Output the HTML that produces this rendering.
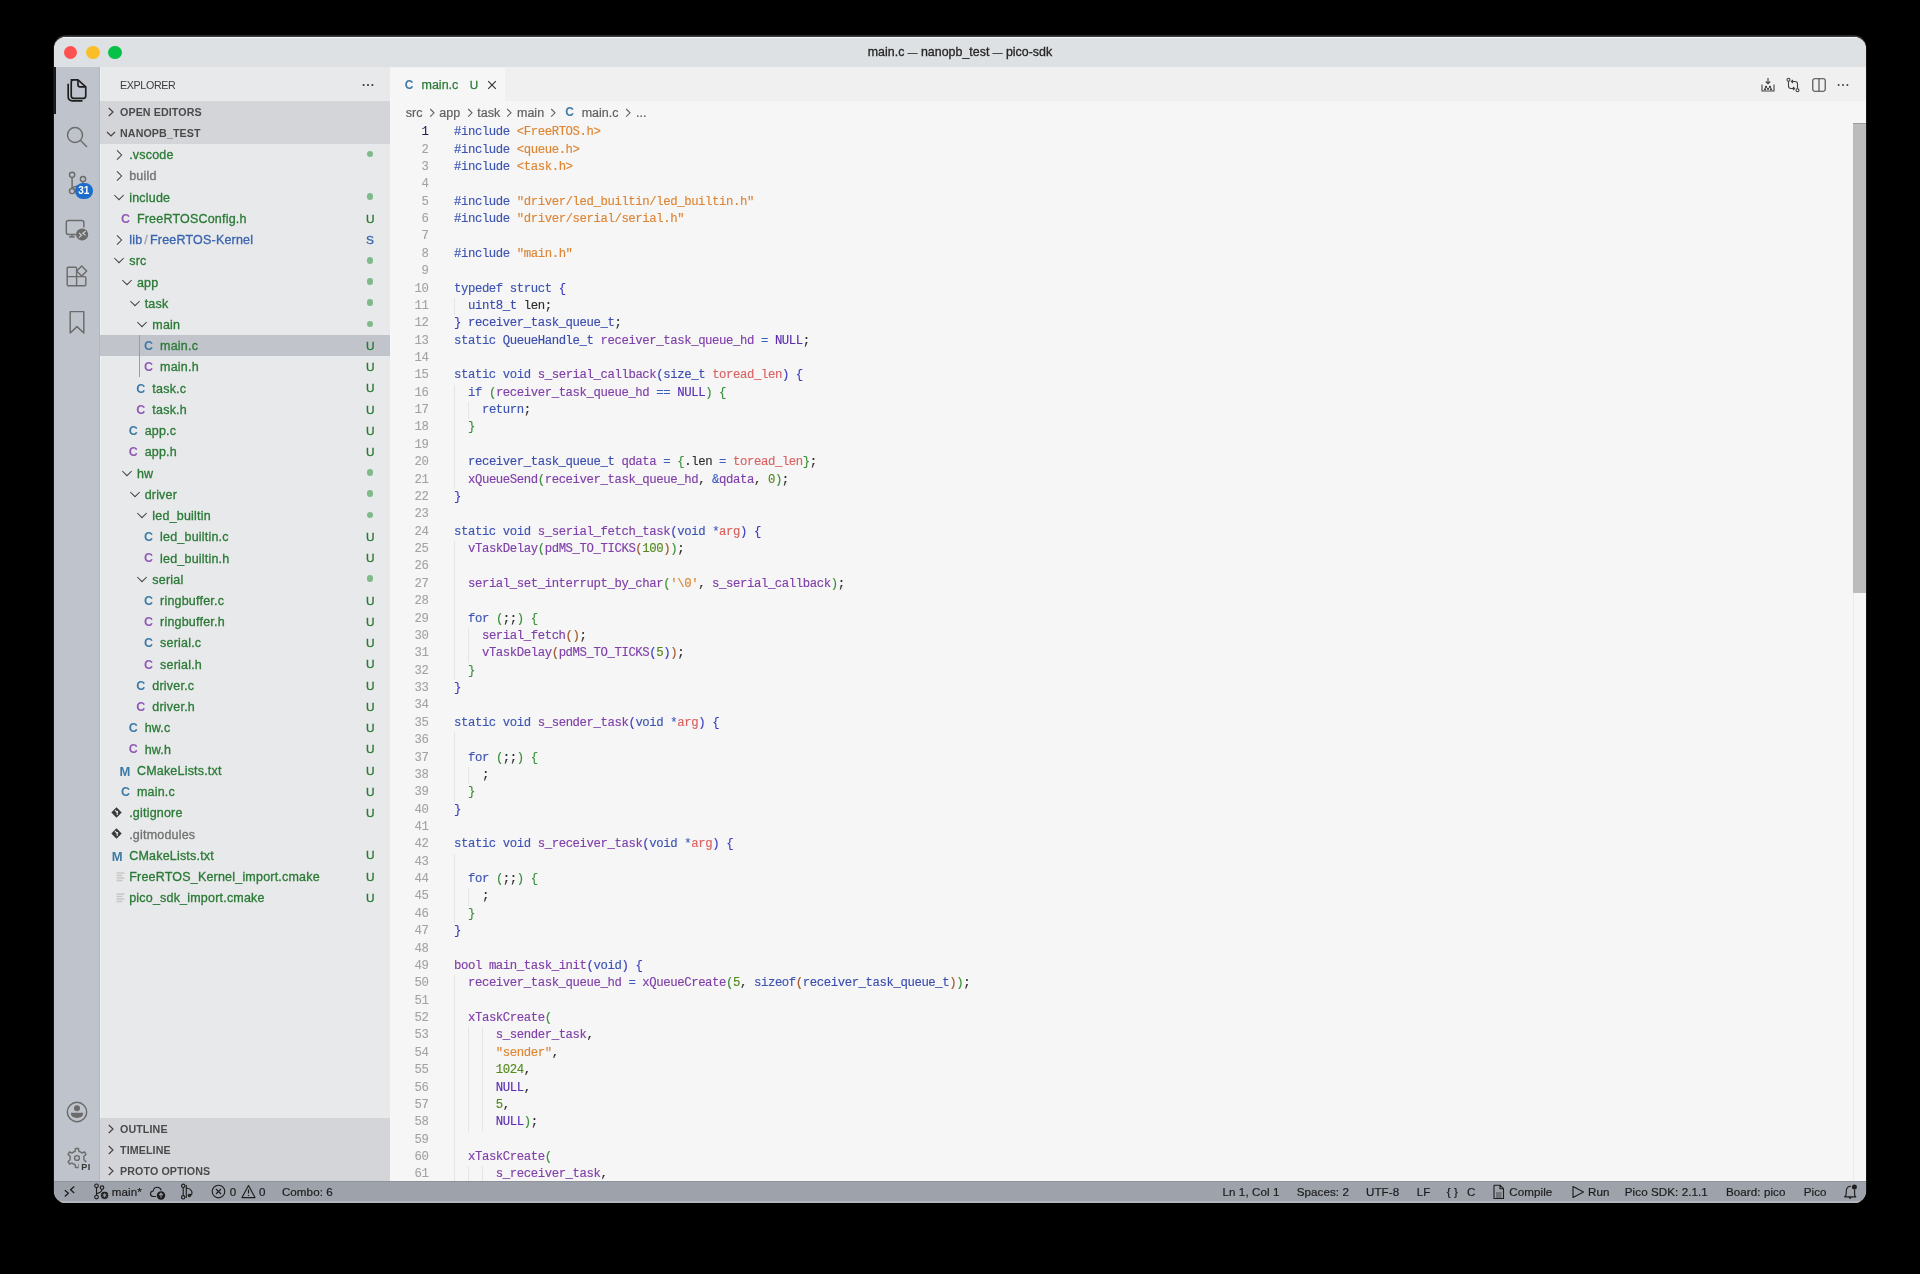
<!DOCTYPE html>
<html><head><meta charset="utf-8">
<style>
*{box-sizing:border-box;margin:0;padding:0}
html,body{width:1920px;height:1274px;background:#000;overflow:hidden}
body{will-change:transform}
body{font-family:"Liberation Sans",sans-serif;position:relative}
.a{position:absolute}
#win{position:absolute;left:54px;top:36.5px;width:1812px;height:1166.5px;border-radius:12px;overflow:hidden;background:#f6f6f6;box-shadow:0 -1.4px 0 0.4px #383838}
#title{position:absolute;left:0;top:0;width:1812px;height:30.5px;background:#dde1e4;border-top:1px solid #f6f7f8}
.tl{position:absolute;top:8.2px;width:13.8px;height:13.8px;border-radius:50%}
#ttext{position:absolute;left:0;width:1812px;top:7.6px;text-align:center;font-size:12.4px;color:#262626;letter-spacing:0.02px;-webkit-text-stroke:0.3px currentColor}
#act{position:absolute;left:0;top:30.5px;width:46px;height:1115px;background:#bfc3cb}
#side{position:absolute;left:46px;top:30.5px;width:290px;height:1115px;background:#e8e9ea}
.row{position:absolute;left:0;width:290px;height:21.23px}
.row.sel{background:#c1c4cb}
.row .ic{position:absolute;line-height:0}
.row .nm{position:absolute;top:1.6px;-webkit-text-stroke:0.32px currentColor;letter-spacing:0.2px;line-height:21.23px;font-size:12.5px;white-space:nowrap}
.row .fi{position:absolute;top:1.4px;line-height:21.23px;font-size:12.5px;font-weight:bold}
.row .fi.m{color:#3d7aa6;font-size:13px;font-weight:bold}
.row .dot{position:absolute;left:266.6px;top:7.1px;width:6.8px;height:6.8px;border-radius:50%;background:#80b98a}
.row .dec{position:absolute;left:266px;top:1.3px;line-height:21.23px;font-size:11.8px;-webkit-text-stroke:0.35px currentColor}
#tabs{position:absolute;left:336px;top:30.5px;width:1476px;height:34px;background:#f0f0f0}
#editor{position:absolute;left:336px;top:65px;width:1476px;height:1080px;background:#f6f6f6}
.ln{position:absolute;left:338.5px;width:90px;text-align:right;font-family:"Liberation Mono",monospace;font-size:12.3px;letter-spacing:-0.405px;line-height:17.37px;color:#a3a3a3;white-space:pre;-webkit-text-stroke:0.1px currentColor}
.ln.act{color:#1f1f5a}
.cl{position:absolute;left:454px;font-family:"Liberation Mono",monospace;font-size:12.3px;letter-spacing:-0.405px;line-height:17.37px;color:#2e2e2e;white-space:pre;-webkit-text-stroke:0.15px currentColor}
.ig{position:absolute;width:1px;height:17.37px;background:#e5e5e5}
.k{color:#3d55b3}.s{color:#dd8533}.f{color:#8040aa}.t{color:#3a4cb0}.p{color:#db6262}.n{color:#558a1f}.nu{color:#5a2eb0}
.b1{color:#3b3fc2}.b2{color:#3a913a}.b3{color:#a0582a}.o{color:#3b5cc0}
.hdr{position:absolute;left:100px;width:290px;height:21.2px;font-size:10.7px;font-weight:bold;color:#4a4a4a;line-height:21.2px}
.hdr span{top:0.8px;letter-spacing:0.1px}
.bc{position:absolute;top:102.6px;line-height:21.3px;font-size:12.5px;color:#616161;white-space:nowrap;-webkit-text-stroke:0.2px currentColor}
.bcs{position:absolute;top:108px;width:7px;height:10px;fill:none;stroke:#616161;stroke-width:1.1}
.sbt{position:absolute;top:1180.6px;line-height:21.3px;font-size:11.6px;color:#1c1c1c;white-space:nowrap;letter-spacing:0.08px;-webkit-text-stroke:0.2px currentColor}
#status{position:absolute;left:0;top:1144.8px;width:1812px;height:22px;background:#9ea3ab;font-size:12.5px;color:#1e1e1e}
</style></head><body>
<div id="win">
  <div id="title">
    <div class="tl" style="left:9.6px;background:#ff5150"></div>
    <div class="tl" style="left:31.8px;background:#fcbe27"></div>
    <div class="tl" style="left:54.1px;background:#05c148"></div>
    <div id="ttext">main.c <span style="font-size:9.6px;position:relative;top:-0.6px">—</span> nanopb_test <span style="font-size:9.6px;position:relative;top:-0.6px">—</span> pico-sdk</div>
  </div>
  <div id="act"></div>
  <div id="side"></div>
  <div style="position:absolute;left:45.3px;top:30.5px;width:0.9px;height:1115px;background:#b3b6bc"></div>
  <div style="position:absolute;left:46.2px;top:30.5px;width:1px;height:1115px;background:#eff1f3"></div>
  <div id="tabs"></div>
  <div id="editor"></div>
  <div id="status"></div>
  <div style="position:absolute;left:0;top:1164.6px;width:1812px;height:2px;background:#b4b8be"></div>
</div>
<div id="sidecontent" style="position:absolute;left:100px;top:0;width:290px;height:1274px">
<div class="row" style="top:143.60px">
<span class="ic" style="left:15.20px;top:5.2px"><svg width="9" height="12" viewBox="0 0 9 12"><path d="M2 1.4 L6.6 6 L2 10.6" fill="none" stroke="#444" stroke-width="1.05"/></svg></span>
<span class="nm" style="left:29.20px;color:#2b7a37">.vscode</span>
<span class="dot"></span>
</div>
<div class="row" style="top:164.83px">
<span class="ic" style="left:15.20px;top:5.2px"><svg width="9" height="12" viewBox="0 0 9 12"><path d="M2 1.4 L6.6 6 L2 10.6" fill="none" stroke="#444" stroke-width="1.05"/></svg></span>
<span class="nm" style="left:29.20px;color:#727272">build</span>
</div>
<div class="row" style="top:186.06px">
<span class="ic" style="left:13.30px;top:6.6px"><svg width="12" height="9" viewBox="0 0 12 9"><path d="M1.3 2 L6 6.7 L10.7 2" fill="none" stroke="#444" stroke-width="1.05"/></svg></span>
<span class="nm" style="left:29.20px;color:#2b7a37">include</span>
<span class="dot"></span>
</div>
<div class="row" style="top:207.29px">
<span class="fi" style="left:20.92px;color:#8f58b5">C</span>
<span class="nm" style="left:36.92px;color:#2b7a37">FreeRTOSConfig.h</span>
<span class="dec" style="color:#2b7a37">U</span>
</div>
<div class="row" style="top:228.52px">
<span class="ic" style="left:15.20px;top:5.2px"><svg width="9" height="12" viewBox="0 0 9 12"><path d="M2 1.4 L6.6 6 L2 10.6" fill="none" stroke="#444" stroke-width="1.05"/></svg></span>
<span class="nm" style="left:29.20px;color:#3b64b0"><span style="color:#3b64b0">lib</span><span style="color:#9aa3b5;margin:0 2px">/</span><span style="color:#3b64b0">FreeRTOS-Kernel</span></span>
<span class="dec" style="color:#3b64b0">S</span>
</div>
<div class="row" style="top:249.75px">
<span class="ic" style="left:13.30px;top:6.6px"><svg width="12" height="9" viewBox="0 0 12 9"><path d="M1.3 2 L6 6.7 L10.7 2" fill="none" stroke="#444" stroke-width="1.05"/></svg></span>
<span class="nm" style="left:29.20px;color:#2b7a37">src</span>
<span class="dot"></span>
</div>
<div class="row" style="top:270.98px">
<span class="ic" style="left:21.02px;top:6.6px"><svg width="12" height="9" viewBox="0 0 12 9"><path d="M1.3 2 L6 6.7 L10.7 2" fill="none" stroke="#444" stroke-width="1.05"/></svg></span>
<span class="nm" style="left:36.92px;color:#2b7a37">app</span>
<span class="dot"></span>
</div>
<div class="row" style="top:292.21px">
<span class="ic" style="left:28.74px;top:6.6px"><svg width="12" height="9" viewBox="0 0 12 9"><path d="M1.3 2 L6 6.7 L10.7 2" fill="none" stroke="#444" stroke-width="1.05"/></svg></span>
<span class="nm" style="left:44.64px;color:#2b7a37">task</span>
<span class="dot"></span>
</div>
<div class="row" style="top:313.44px">
<span class="ic" style="left:36.46px;top:6.6px"><svg width="12" height="9" viewBox="0 0 12 9"><path d="M1.3 2 L6 6.7 L10.7 2" fill="none" stroke="#444" stroke-width="1.05"/></svg></span>
<span class="nm" style="left:52.36px;color:#2b7a37">main</span>
<span class="dot"></span>
</div>
<div class="row sel" style="top:334.67px">
<span class="fi" style="left:44.08px;color:#3d7aa6">C</span>
<span class="nm" style="left:60.08px;color:#2b7a37">main.c</span>
<span class="dec" style="color:#2b7a37">U</span>
</div>
<div class="row" style="top:355.90px">
<span class="fi" style="left:44.08px;color:#8f58b5">C</span>
<span class="nm" style="left:60.08px;color:#2b7a37">main.h</span>
<span class="dec" style="color:#2b7a37">U</span>
</div>
<div class="row" style="top:377.13px">
<span class="fi" style="left:36.36px;color:#3d7aa6">C</span>
<span class="nm" style="left:52.36px;color:#2b7a37">task.c</span>
<span class="dec" style="color:#2b7a37">U</span>
</div>
<div class="row" style="top:398.36px">
<span class="fi" style="left:36.36px;color:#8f58b5">C</span>
<span class="nm" style="left:52.36px;color:#2b7a37">task.h</span>
<span class="dec" style="color:#2b7a37">U</span>
</div>
<div class="row" style="top:419.59px">
<span class="fi" style="left:28.64px;color:#3d7aa6">C</span>
<span class="nm" style="left:44.64px;color:#2b7a37">app.c</span>
<span class="dec" style="color:#2b7a37">U</span>
</div>
<div class="row" style="top:440.82px">
<span class="fi" style="left:28.64px;color:#8f58b5">C</span>
<span class="nm" style="left:44.64px;color:#2b7a37">app.h</span>
<span class="dec" style="color:#2b7a37">U</span>
</div>
<div class="row" style="top:462.05px">
<span class="ic" style="left:21.02px;top:6.6px"><svg width="12" height="9" viewBox="0 0 12 9"><path d="M1.3 2 L6 6.7 L10.7 2" fill="none" stroke="#444" stroke-width="1.05"/></svg></span>
<span class="nm" style="left:36.92px;color:#2b7a37">hw</span>
<span class="dot"></span>
</div>
<div class="row" style="top:483.28px">
<span class="ic" style="left:28.74px;top:6.6px"><svg width="12" height="9" viewBox="0 0 12 9"><path d="M1.3 2 L6 6.7 L10.7 2" fill="none" stroke="#444" stroke-width="1.05"/></svg></span>
<span class="nm" style="left:44.64px;color:#2b7a37">driver</span>
<span class="dot"></span>
</div>
<div class="row" style="top:504.51px">
<span class="ic" style="left:36.46px;top:6.6px"><svg width="12" height="9" viewBox="0 0 12 9"><path d="M1.3 2 L6 6.7 L10.7 2" fill="none" stroke="#444" stroke-width="1.05"/></svg></span>
<span class="nm" style="left:52.36px;color:#2b7a37">led_builtin</span>
<span class="dot"></span>
</div>
<div class="row" style="top:525.74px">
<span class="fi" style="left:44.08px;color:#3d7aa6">C</span>
<span class="nm" style="left:60.08px;color:#2b7a37">led_builtin.c</span>
<span class="dec" style="color:#2b7a37">U</span>
</div>
<div class="row" style="top:546.97px">
<span class="fi" style="left:44.08px;color:#8f58b5">C</span>
<span class="nm" style="left:60.08px;color:#2b7a37">led_builtin.h</span>
<span class="dec" style="color:#2b7a37">U</span>
</div>
<div class="row" style="top:568.20px">
<span class="ic" style="left:36.46px;top:6.6px"><svg width="12" height="9" viewBox="0 0 12 9"><path d="M1.3 2 L6 6.7 L10.7 2" fill="none" stroke="#444" stroke-width="1.05"/></svg></span>
<span class="nm" style="left:52.36px;color:#2b7a37">serial</span>
<span class="dot"></span>
</div>
<div class="row" style="top:589.43px">
<span class="fi" style="left:44.08px;color:#3d7aa6">C</span>
<span class="nm" style="left:60.08px;color:#2b7a37">ringbuffer.c</span>
<span class="dec" style="color:#2b7a37">U</span>
</div>
<div class="row" style="top:610.66px">
<span class="fi" style="left:44.08px;color:#8f58b5">C</span>
<span class="nm" style="left:60.08px;color:#2b7a37">ringbuffer.h</span>
<span class="dec" style="color:#2b7a37">U</span>
</div>
<div class="row" style="top:631.89px">
<span class="fi" style="left:44.08px;color:#3d7aa6">C</span>
<span class="nm" style="left:60.08px;color:#2b7a37">serial.c</span>
<span class="dec" style="color:#2b7a37">U</span>
</div>
<div class="row" style="top:653.12px">
<span class="fi" style="left:44.08px;color:#8f58b5">C</span>
<span class="nm" style="left:60.08px;color:#2b7a37">serial.h</span>
<span class="dec" style="color:#2b7a37">U</span>
</div>
<div class="row" style="top:674.35px">
<span class="fi" style="left:36.36px;color:#3d7aa6">C</span>
<span class="nm" style="left:52.36px;color:#2b7a37">driver.c</span>
<span class="dec" style="color:#2b7a37">U</span>
</div>
<div class="row" style="top:695.58px">
<span class="fi" style="left:36.36px;color:#8f58b5">C</span>
<span class="nm" style="left:52.36px;color:#2b7a37">driver.h</span>
<span class="dec" style="color:#2b7a37">U</span>
</div>
<div class="row" style="top:716.81px">
<span class="fi" style="left:28.64px;color:#3d7aa6">C</span>
<span class="nm" style="left:44.64px;color:#2b7a37">hw.c</span>
<span class="dec" style="color:#2b7a37">U</span>
</div>
<div class="row" style="top:738.04px">
<span class="fi" style="left:28.64px;color:#8f58b5">C</span>
<span class="nm" style="left:44.64px;color:#2b7a37">hw.h</span>
<span class="dec" style="color:#2b7a37">U</span>
</div>
<div class="row" style="top:759.27px">
<span class="fi m" style="left:19.42px">M</span>
<span class="nm" style="left:36.92px;color:#2b7a37">CMakeLists.txt</span>
<span class="dec" style="color:#2b7a37">U</span>
</div>
<div class="row" style="top:780.50px">
<span class="fi" style="left:20.92px;color:#3d7aa6">C</span>
<span class="nm" style="left:36.92px;color:#2b7a37">main.c</span>
<span class="dec" style="color:#2b7a37">U</span>
</div>
<div class="row" style="top:801.73px">
<span class="ic" style="left:10.70px;top:5.5px"><svg width="11" height="11" viewBox="0 0 11 11"><path d="M5.5 0.3 L10.7 5.5 L5.5 10.7 L0.3 5.5 Z" fill="#3a3a3a"/><path d="M4 3.2 L6.8 6 M6.2 4.2 L6.2 8" stroke="#e8e9ea" stroke-width="1.1"/><circle cx="6.3" cy="4.8" r="0.9" fill="#e8e9ea"/></svg></span>
<span class="nm" style="left:29.20px;color:#2b7a37">.gitignore</span>
<span class="dec" style="color:#2b7a37">U</span>
</div>
<div class="row" style="top:822.96px">
<span class="ic" style="left:10.70px;top:5.5px"><svg width="11" height="11" viewBox="0 0 11 11"><path d="M5.5 0.3 L10.7 5.5 L5.5 10.7 L0.3 5.5 Z" fill="#3a3a3a"/><path d="M4 3.2 L6.8 6 M6.2 4.2 L6.2 8" stroke="#e8e9ea" stroke-width="1.1"/><circle cx="6.3" cy="4.8" r="0.9" fill="#e8e9ea"/></svg></span>
<span class="nm" style="left:29.20px;color:#727272">.gitmodules</span>
</div>
<div class="row" style="top:844.19px">
<span class="fi m" style="left:11.70px">M</span>
<span class="nm" style="left:29.20px;color:#2b7a37">CMakeLists.txt</span>
<span class="dec" style="color:#2b7a37">U</span>
</div>
<div class="row" style="top:865.42px">
<span class="ic" style="left:15.60px;top:6.2px"><svg width="10" height="10" viewBox="0 0 10 10"><path d="M0.5 1 H8.5 M0.5 3.5 H6.5 M0.5 6 H8.5 M0.5 8.5 H6.5" stroke="#c8c8c8" stroke-width="1.3"/></svg></span>
<span class="nm" style="left:29.20px;color:#2b7a37">FreeRTOS_Kernel_import.cmake</span>
<span class="dec" style="color:#2b7a37">U</span>
</div>
<div class="row" style="top:886.65px">
<span class="ic" style="left:15.60px;top:6.2px"><svg width="10" height="10" viewBox="0 0 10 10"><path d="M0.5 1 H8.5 M0.5 3.5 H6.5 M0.5 6 H8.5 M0.5 8.5 H6.5" stroke="#c8c8c8" stroke-width="1.3"/></svg></span>
<span class="nm" style="left:29.20px;color:#2b7a37">pico_sdk_import.cmake</span>
<span class="dec" style="color:#2b7a37">U</span>
</div>
<div class="a" style="left:39.4px;top:334.67px;width:0.9px;height:42.46px;background:#9c9ea3"></div>
</div>
<div id="code" style="position:absolute;left:0;top:0;width:1852px;height:1181.3px;overflow:hidden">
<div class="ln act" style="top:124.20px">1</div>
<div class="cl" style="top:124.20px"><span class="k">#include</span> <span class="s">&lt;FreeRTOS.h&gt;</span></div>
<div class="ln" style="top:141.57px">2</div>
<div class="cl" style="top:141.57px"><span class="k">#include</span> <span class="s">&lt;queue.h&gt;</span></div>
<div class="ln" style="top:158.94px">3</div>
<div class="cl" style="top:158.94px"><span class="k">#include</span> <span class="s">&lt;task.h&gt;</span></div>
<div class="ln" style="top:176.31px">4</div>
<div class="ln" style="top:193.68px">5</div>
<div class="cl" style="top:193.68px"><span class="k">#include</span> <span class="s">"driver/led_builtin/led_builtin.h"</span></div>
<div class="ln" style="top:211.05px">6</div>
<div class="cl" style="top:211.05px"><span class="k">#include</span> <span class="s">"driver/serial/serial.h"</span></div>
<div class="ln" style="top:228.42px">7</div>
<div class="ln" style="top:245.79px">8</div>
<div class="cl" style="top:245.79px"><span class="k">#include</span> <span class="s">"main.h"</span></div>
<div class="ln" style="top:263.16px">9</div>
<div class="ln" style="top:280.53px">10</div>
<div class="cl" style="top:280.53px"><span class="k">typedef</span> <span class="k">struct</span> <span class="b1">{</span></div>
<div class="ln" style="top:297.90px">11</div>
<div class="ig" style="top:297.90px;left:454.00px"></div>
<div class="cl" style="top:297.90px">  <span class="t">uint8_t</span> len;</div>
<div class="ln" style="top:315.27px">12</div>
<div class="cl" style="top:315.27px"><span class="b1">}</span> <span class="t">receiver_task_queue_t</span>;</div>
<div class="ln" style="top:332.64px">13</div>
<div class="cl" style="top:332.64px"><span class="k">static</span> <span class="t">QueueHandle_t</span> <span class="f">receiver_task_queue_hd</span> <span class="o">=</span> <span class="nu">NULL</span>;</div>
<div class="ln" style="top:350.01px">14</div>
<div class="ln" style="top:367.38px">15</div>
<div class="cl" style="top:367.38px"><span class="k">static</span> <span class="k">void</span> <span class="f">s_serial_callback</span><span class="b1">(</span><span class="t">size_t</span> <span class="p">toread_len</span><span class="b1">)</span> <span class="b1">{</span></div>
<div class="ln" style="top:384.75px">16</div>
<div class="ig" style="top:384.75px;left:454.00px"></div>
<div class="cl" style="top:384.75px">  <span class="k">if</span> <span class="b2">(</span><span class="f">receiver_task_queue_hd</span> <span class="o">==</span> <span class="nu">NULL</span><span class="b2">)</span> <span class="b2">{</span></div>
<div class="ln" style="top:402.12px">17</div>
<div class="ig" style="top:402.12px;left:454.00px"></div>
<div class="ig" style="top:402.12px;left:467.90px"></div>
<div class="cl" style="top:402.12px">    <span class="k">return</span>;</div>
<div class="ln" style="top:419.49px">18</div>
<div class="ig" style="top:419.49px;left:454.00px"></div>
<div class="cl" style="top:419.49px">  <span class="b2">}</span></div>
<div class="ln" style="top:436.86px">19</div>
<div class="ig" style="top:436.86px;left:454.00px"></div>
<div class="ln" style="top:454.23px">20</div>
<div class="ig" style="top:454.23px;left:454.00px"></div>
<div class="cl" style="top:454.23px">  <span class="t">receiver_task_queue_t</span> <span class="f">qdata</span> <span class="o">=</span> <span class="b2">{</span>.len <span class="o">=</span> <span class="p">toread_len</span><span class="b2">}</span>;</div>
<div class="ln" style="top:471.60px">21</div>
<div class="ig" style="top:471.60px;left:454.00px"></div>
<div class="cl" style="top:471.60px">  <span class="f">xQueueSend</span><span class="b2">(</span><span class="f">receiver_task_queue_hd</span>, <span class="o">&amp;</span><span class="f">qdata</span>, <span class="n">0</span><span class="b2">)</span>;</div>
<div class="ln" style="top:488.97px">22</div>
<div class="cl" style="top:488.97px"><span class="b1">}</span></div>
<div class="ln" style="top:506.34px">23</div>
<div class="ln" style="top:523.71px">24</div>
<div class="cl" style="top:523.71px"><span class="k">static</span> <span class="k">void</span> <span class="f">s_serial_fetch_task</span><span class="b1">(</span><span class="k">void</span> <span class="o">*</span><span class="p">arg</span><span class="b1">)</span> <span class="b1">{</span></div>
<div class="ln" style="top:541.08px">25</div>
<div class="ig" style="top:541.08px;left:454.00px"></div>
<div class="cl" style="top:541.08px">  <span class="f">vTaskDelay</span><span class="b2">(</span><span class="f">pdMS_TO_TICKS</span><span class="b3">(</span><span class="n">100</span><span class="b3">)</span><span class="b2">)</span>;</div>
<div class="ln" style="top:558.45px">26</div>
<div class="ig" style="top:558.45px;left:454.00px"></div>
<div class="ln" style="top:575.82px">27</div>
<div class="ig" style="top:575.82px;left:454.00px"></div>
<div class="cl" style="top:575.82px">  <span class="f">serial_set_interrupt_by_char</span><span class="b2">(</span><span class="s">'\0'</span>, <span class="f">s_serial_callback</span><span class="b2">)</span>;</div>
<div class="ln" style="top:593.19px">28</div>
<div class="ig" style="top:593.19px;left:454.00px"></div>
<div class="ln" style="top:610.56px">29</div>
<div class="ig" style="top:610.56px;left:454.00px"></div>
<div class="cl" style="top:610.56px">  <span class="k">for</span> <span class="b2">(</span>;;<span class="b2">)</span> <span class="b2">{</span></div>
<div class="ln" style="top:627.93px">30</div>
<div class="ig" style="top:627.93px;left:454.00px"></div>
<div class="ig" style="top:627.93px;left:467.90px"></div>
<div class="cl" style="top:627.93px">    <span class="f">serial_fetch</span><span class="b3">(</span><span class="b3">)</span>;</div>
<div class="ln" style="top:645.30px">31</div>
<div class="ig" style="top:645.30px;left:454.00px"></div>
<div class="ig" style="top:645.30px;left:467.90px"></div>
<div class="cl" style="top:645.30px">    <span class="f">vTaskDelay</span><span class="b3">(</span><span class="f">pdMS_TO_TICKS</span><span class="b1">(</span><span class="n">5</span><span class="b1">)</span><span class="b3">)</span>;</div>
<div class="ln" style="top:662.67px">32</div>
<div class="ig" style="top:662.67px;left:454.00px"></div>
<div class="cl" style="top:662.67px">  <span class="b2">}</span></div>
<div class="ln" style="top:680.04px">33</div>
<div class="cl" style="top:680.04px"><span class="b1">}</span></div>
<div class="ln" style="top:697.41px">34</div>
<div class="ln" style="top:714.78px">35</div>
<div class="cl" style="top:714.78px"><span class="k">static</span> <span class="k">void</span> <span class="f">s_sender_task</span><span class="b1">(</span><span class="k">void</span> <span class="o">*</span><span class="p">arg</span><span class="b1">)</span> <span class="b1">{</span></div>
<div class="ln" style="top:732.15px">36</div>
<div class="ig" style="top:732.15px;left:454.00px"></div>
<div class="ln" style="top:749.52px">37</div>
<div class="ig" style="top:749.52px;left:454.00px"></div>
<div class="cl" style="top:749.52px">  <span class="k">for</span> <span class="b2">(</span>;;<span class="b2">)</span> <span class="b2">{</span></div>
<div class="ln" style="top:766.89px">38</div>
<div class="ig" style="top:766.89px;left:454.00px"></div>
<div class="ig" style="top:766.89px;left:467.90px"></div>
<div class="cl" style="top:766.89px">    ;</div>
<div class="ln" style="top:784.26px">39</div>
<div class="ig" style="top:784.26px;left:454.00px"></div>
<div class="cl" style="top:784.26px">  <span class="b2">}</span></div>
<div class="ln" style="top:801.63px">40</div>
<div class="cl" style="top:801.63px"><span class="b1">}</span></div>
<div class="ln" style="top:819.00px">41</div>
<div class="ln" style="top:836.37px">42</div>
<div class="cl" style="top:836.37px"><span class="k">static</span> <span class="k">void</span> <span class="f">s_receiver_task</span><span class="b1">(</span><span class="k">void</span> <span class="o">*</span><span class="p">arg</span><span class="b1">)</span> <span class="b1">{</span></div>
<div class="ln" style="top:853.74px">43</div>
<div class="ig" style="top:853.74px;left:454.00px"></div>
<div class="ln" style="top:871.11px">44</div>
<div class="ig" style="top:871.11px;left:454.00px"></div>
<div class="cl" style="top:871.11px">  <span class="k">for</span> <span class="b2">(</span>;;<span class="b2">)</span> <span class="b2">{</span></div>
<div class="ln" style="top:888.48px">45</div>
<div class="ig" style="top:888.48px;left:454.00px"></div>
<div class="ig" style="top:888.48px;left:467.90px"></div>
<div class="cl" style="top:888.48px">    ;</div>
<div class="ln" style="top:905.85px">46</div>
<div class="ig" style="top:905.85px;left:454.00px"></div>
<div class="cl" style="top:905.85px">  <span class="b2">}</span></div>
<div class="ln" style="top:923.22px">47</div>
<div class="cl" style="top:923.22px"><span class="b1">}</span></div>
<div class="ln" style="top:940.59px">48</div>
<div class="ln" style="top:957.96px">49</div>
<div class="cl" style="top:957.96px"><span class="f">bool</span> <span class="f">main_task_init</span><span class="b1">(</span><span class="k">void</span><span class="b1">)</span> <span class="b1">{</span></div>
<div class="ln" style="top:975.33px">50</div>
<div class="ig" style="top:975.33px;left:454.00px"></div>
<div class="cl" style="top:975.33px">  <span class="f">receiver_task_queue_hd</span> <span class="o">=</span> <span class="f">xQueueCreate</span><span class="b2">(</span><span class="n">5</span>, <span class="k">sizeof</span><span class="b3">(</span><span class="t">receiver_task_queue_t</span><span class="b3">)</span><span class="b2">)</span>;</div>
<div class="ln" style="top:992.70px">51</div>
<div class="ig" style="top:992.70px;left:454.00px"></div>
<div class="ln" style="top:1010.07px">52</div>
<div class="ig" style="top:1010.07px;left:454.00px"></div>
<div class="cl" style="top:1010.07px">  <span class="f">xTaskCreate</span><span class="b2">(</span></div>
<div class="ln" style="top:1027.44px">53</div>
<div class="ig" style="top:1027.44px;left:454.00px"></div>
<div class="ig" style="top:1027.44px;left:467.90px"></div>
<div class="ig" style="top:1027.44px;left:481.80px"></div>
<div class="cl" style="top:1027.44px">      <span class="f">s_sender_task</span>,</div>
<div class="ln" style="top:1044.81px">54</div>
<div class="ig" style="top:1044.81px;left:454.00px"></div>
<div class="ig" style="top:1044.81px;left:467.90px"></div>
<div class="ig" style="top:1044.81px;left:481.80px"></div>
<div class="cl" style="top:1044.81px">      <span class="s">"sender"</span>,</div>
<div class="ln" style="top:1062.18px">55</div>
<div class="ig" style="top:1062.18px;left:454.00px"></div>
<div class="ig" style="top:1062.18px;left:467.90px"></div>
<div class="ig" style="top:1062.18px;left:481.80px"></div>
<div class="cl" style="top:1062.18px">      <span class="n">1024</span>,</div>
<div class="ln" style="top:1079.55px">56</div>
<div class="ig" style="top:1079.55px;left:454.00px"></div>
<div class="ig" style="top:1079.55px;left:467.90px"></div>
<div class="ig" style="top:1079.55px;left:481.80px"></div>
<div class="cl" style="top:1079.55px">      <span class="nu">NULL</span>,</div>
<div class="ln" style="top:1096.92px">57</div>
<div class="ig" style="top:1096.92px;left:454.00px"></div>
<div class="ig" style="top:1096.92px;left:467.90px"></div>
<div class="ig" style="top:1096.92px;left:481.80px"></div>
<div class="cl" style="top:1096.92px">      <span class="n">5</span>,</div>
<div class="ln" style="top:1114.29px">58</div>
<div class="ig" style="top:1114.29px;left:454.00px"></div>
<div class="ig" style="top:1114.29px;left:467.90px"></div>
<div class="ig" style="top:1114.29px;left:481.80px"></div>
<div class="cl" style="top:1114.29px">      <span class="nu">NULL</span><span class="b2">)</span>;</div>
<div class="ln" style="top:1131.66px">59</div>
<div class="ig" style="top:1131.66px;left:454.00px"></div>
<div class="ln" style="top:1149.03px">60</div>
<div class="ig" style="top:1149.03px;left:454.00px"></div>
<div class="cl" style="top:1149.03px">  <span class="f">xTaskCreate</span><span class="b2">(</span></div>
<div class="ln" style="top:1166.40px">61</div>
<div class="ig" style="top:1166.40px;left:454.00px"></div>
<div class="ig" style="top:1166.40px;left:467.90px"></div>
<div class="ig" style="top:1166.40px;left:481.80px"></div>
<div class="cl" style="top:1166.40px">      <span class="f">s_receiver_task</span>,</div>
</div>

<!-- sidebar header -->
<div class="a" style="left:100px;top:67px;width:290px;height:34px;">
  <div class="a" style="left:20px;top:1px;line-height:35px;font-size:10.7px;color:#3c3c3c;letter-spacing:-0.35px">EXPLORER</div>
  <svg class="a" style="left:262px;top:16px" width="12" height="4" viewBox="0 0 12 4"><circle cx="1.6" cy="2" r="1.1" fill="#3c3c3c"/><circle cx="6" cy="2" r="1.1" fill="#3c3c3c"/><circle cx="10.4" cy="2" r="1.1" fill="#3c3c3c"/></svg>
</div>
<div class="a" style="left:100px;top:101.3px;width:290px;height:42.4px;background:#d4d5d8"></div>
<div class="a hdr" style="top:101.3px"><svg class="a" style="left:7px;top:6px" width="8" height="10" viewBox="0 0 8 10"><path d="M1.8 1 L6 5 L1.8 9" fill="none" stroke="#424242" stroke-width="1.15"/></svg><span class="a" style="left:20px">OPEN EDITORS</span></div>
<div class="a hdr" style="top:122.5px"><svg class="a" style="left:5.5px;top:7.5px" width="10" height="8" viewBox="0 0 10 8"><path d="M1 2 L5 6 L9 2" fill="none" stroke="#424242" stroke-width="1.15"/></svg><span class="a" style="left:20px">NANOPB_TEST</span></div>
<div class="a" style="left:100px;top:1117.8px;width:290px;height:63.4px;background:#d4d5d8"></div>
<div class="a hdr" style="top:1117.8px"><svg class="a" style="left:7px;top:6px" width="8" height="10" viewBox="0 0 8 10"><path d="M1.8 1 L6 5 L1.8 9" fill="none" stroke="#424242" stroke-width="1.15"/></svg><span class="a" style="left:20px">OUTLINE</span></div>
<div class="a hdr" style="top:1139px"><svg class="a" style="left:7px;top:6px" width="8" height="10" viewBox="0 0 8 10"><path d="M1.8 1 L6 5 L1.8 9" fill="none" stroke="#424242" stroke-width="1.15"/></svg><span class="a" style="left:20px">TIMELINE</span></div>
<div class="a hdr" style="top:1160.2px"><svg class="a" style="left:7px;top:6px" width="8" height="10" viewBox="0 0 8 10"><path d="M1.8 1 L6 5 L1.8 9" fill="none" stroke="#424242" stroke-width="1.15"/></svg><span class="a" style="left:20px">PROTO OPTIONS</span></div>

<!-- tab -->
<div class="a" style="left:390px;top:67.5px;width:115.4px;height:33.8px;background:#f6f6f6"></div>
<div class="a" style="left:404.8px;top:67.8px;line-height:34px;font-size:12px;font-weight:bold;color:#3d7aa6">C</div>
<div class="a" style="left:421.5px;top:67.5px;line-height:34px;font-size:12.5px;color:#2b7a37;-webkit-text-stroke:0.25px currentColor">main.c</div>
<div class="a" style="left:469.8px;top:67.5px;line-height:34px;font-size:11.6px;color:#2b7a37;-webkit-text-stroke:0.3px currentColor">U</div>
<svg class="a" style="left:486.5px;top:80px" width="10" height="10" viewBox="0 0 10 10"><path d="M1.2 1.2 L8.8 8.8 M8.8 1.2 L1.2 8.8" stroke="#303030" stroke-width="1.1"/></svg>
<!-- tab actions -->
<svg class="a" style="left:1760px;top:77px" width="16" height="16" viewBox="0 0 16 16" fill="none" stroke="#424242" stroke-width="1.1"><path d="M2 7.5 V14 H14 V7.5"/><path d="M8 1 V6.5 M5.8 4.5 L8 6.7 L10.2 4.5"/><circle cx="6" cy="10" r="0.6" fill="#424242"/><circle cx="10" cy="10" r="0.6" fill="#424242"/><circle cx="8" cy="11.8" r="0.6" fill="#424242"/><circle cx="5" cy="12.3" r="0.6" fill="#424242"/><circle cx="11" cy="12.3" r="0.6" fill="#424242"/></svg>
<svg class="a" style="left:1785px;top:77px" width="16" height="16" viewBox="0 0 16 16" fill="none" stroke="#424242" stroke-width="1.1"><circle cx="3.5" cy="2.8" r="1.5"/><circle cx="12.5" cy="13.2" r="1.5"/><path d="M3.5 4.3 V9 Q3.5 11.5 6 11.5 H9.5 M8 10 L9.6 11.5 L8 13"/><path d="M12.5 11.7 V7 Q12.5 4.5 10 4.5 H6.5 M8 3 L6.4 4.5 L8 6"/></svg>
<svg class="a" style="left:1811px;top:77px" width="16" height="16" viewBox="0 0 16 16" fill="none" stroke="#424242" stroke-width="1.1"><rect x="1.8" y="1.8" width="12.4" height="12.4" rx="1.6"/><path d="M8 1.8 V14.2"/></svg>
<svg class="a" style="left:1837px;top:83px" width="12" height="4" viewBox="0 0 12 4"><circle cx="1.6" cy="2" r="1.0" fill="#424242"/><circle cx="6" cy="2" r="1.0" fill="#424242"/><circle cx="10.4" cy="2" r="1.0" fill="#424242"/></svg>

<!-- breadcrumbs -->
<div class="a bc" style="left:405.8px">src</div>
<div class="a bc" style="left:439.3px">app</div>
<div class="a bc" style="left:477.3px">task</div>
<div class="a bc" style="left:517px">main</div>
<div class="a" style="left:565.2px;top:102.4px;line-height:21.3px;font-size:12px;font-weight:bold;color:#3d7aa6">C</div>
<div class="a bc" style="left:581.7px">main.c</div>
<div class="a bc" style="left:636px">...</div>
<svg class="a bcs" style="left:428.5px"><path d="M1.2 1 L5 4.8 L1.2 8.6"/></svg>
<svg class="a bcs" style="left:466.5px"><path d="M1.2 1 L5 4.8 L1.2 8.6"/></svg>
<svg class="a bcs" style="left:506.2px"><path d="M1.2 1 L5 4.8 L1.2 8.6"/></svg>
<svg class="a bcs" style="left:550.4px"><path d="M1.2 1 L5 4.8 L1.2 8.6"/></svg>
<svg class="a bcs" style="left:624.8px"><path d="M1.2 1 L5 4.8 L1.2 8.6"/></svg>

<!-- scrollbar -->
<div class="a" style="left:1852.6px;top:593.4px;width:1px;height:588px;background:#ebebeb"></div>
<div class="a" style="left:1852.6px;top:122.6px;width:13.4px;height:470.8px;background:#bcbcbc"></div>
<div class="a" style="left:1852.6px;top:122.6px;width:13.4px;height:1px;background:#9a9a9a"></div>


<!-- activity bar -->
<div class="a" style="left:54px;top:67px;width:2.2px;height:47px;background:#1b1b1b"></div>
<svg class="a" style="left:65.6px;top:78.4px" width="22.8" height="23.8" viewBox="0 0 24 25" fill="none" stroke="#1e1e1e" stroke-width="1.75" stroke-linejoin="round">
 <path d="M5.5 2 H12.6 L20.8 9.3 V19 Q20.8 21.4 18.4 21.4 H7.9 Q5.5 21.4 5.5 19 V4.4 Q5.5 2 7.9 2 Z"/>
 <path d="M12.6 2 V7 Q12.6 9.3 14.9 9.3 H20.8"/>
 <path d="M2.3 6 V19.5 Q2.3 24 6.8 24 H17.3"/>
</svg>
<svg class="a" style="left:64px;top:124px" width="26" height="26" viewBox="0 0 26 26" fill="none" stroke="#6b6b6b" stroke-width="1.45">
 <circle cx="11" cy="11" r="7.5"/><path d="M16.6 16.6 L23 23"/>
</svg>
<svg class="a" style="left:64px;top:168px" width="26" height="28" viewBox="0 0 26 28" fill="none" stroke="#6b6b6b" stroke-width="1.45">
 <circle cx="8.1" cy="6.8" r="2.6"/><circle cx="19" cy="11" r="2.6"/><circle cx="8.1" cy="23" r="2.6"/>
 <path d="M8.1 9.4 V20.4"/><path d="M19 13.6 Q19 18 12 18.5 Q8.1 19 8.1 20.4"/>
</svg>
<div class="a" style="left:74.6px;top:182.8px;width:18.2px;height:16.4px;border-radius:8.5px;background:#1b6ccc;color:#fff;font-size:10px;font-weight:bold;text-align:center;line-height:16.6px;letter-spacing:-0.2px">31</div>
<svg class="a" style="left:64px;top:217px" width="28" height="26" viewBox="0 0 28 26" fill="none" stroke="#6b6b6b" stroke-width="1.45">
 <path d="M12.5 17.5 H4.5 Q2.3 17.5 2.3 15.3 V5.6 Q2.3 3.4 4.5 3.4 H17.7 Q19.9 3.4 19.9 5.6 V10.5"/>
 <path d="M5.1 19.9 H10.8"/><path d="M8 17.5 V19.9"/>
 <circle cx="18.1" cy="17.5" r="6.1" fill="#6b6b6b" stroke="none"/>
 <path d="M14.9 15.9 L17.6 18.2 L14.9 20.6 M21.6 14 L18.9 16.2 L21.6 18.4" stroke="#c9ccd3" stroke-width="1.2"/>
</svg>
<svg class="a" style="left:65px;top:263px" width="24" height="26" viewBox="0 0 24 26" fill="none" stroke="#6b6b6b" stroke-width="1.4" stroke-linejoin="round">
 <path d="M3.2 4.2 H10.6 Q11.6 4.2 11.6 5.2 V13.6 H2.2 V5.2 Q2.2 4.2 3.2 4.2 Z"/>
 <path d="M2.2 13.6 V21.7 Q2.2 22.7 3.2 22.7 H19.8 Q20.8 22.7 20.8 21.7 V14.6 Q20.8 13.6 19.8 13.6 H11.6 V22.7"/>
 <path d="M16.7 2.9 L21.7 7.9 L16.7 12.9 L11.7 7.9 Z"/>
</svg>
<svg class="a" style="left:66px;top:309px" width="22" height="27" viewBox="0 0 22 27" fill="none" stroke="#6b6b6b" stroke-width="1.45" stroke-linejoin="round">
 <path d="M4.2 2.6 H17.8 V24 L11 17.6 L4.2 24 Z"/>
</svg>
<svg class="a" style="left:65px;top:1100px" width="24" height="24" viewBox="0 0 24 24" fill="none" stroke="#6b6b6b" stroke-width="1.45">
 <circle cx="12" cy="12" r="9.7"/>
 <circle cx="12" cy="8.2" r="2.3" fill="#6b6b6b"/>
 <path d="M6.6 13.5 Q6.8 17.2 12 17.2 Q17.2 17.2 17.4 13.5 Z" fill="#6b6b6b"/>
</svg>
<svg class="a" style="left:64.3px;top:1145.1px" width="26" height="26" viewBox="0 0 26 26" fill="none" stroke="#6b6b6b" stroke-width="1.4" stroke-linejoin="round">
 <path d="M9.71 6.82 L11.19 6.24 L11.50 3.52 L14.50 3.52 L14.81 6.24 L16.71 7.06 L17.95 8.05 L20.46 6.96 L21.96 9.56 L19.76 11.19 L20.00 13.24 L19.76 14.81 L21.96 16.44 L20.46 19.04 L17.95 17.95 L16.29 19.18 L14.81 19.76 L14.50 22.48 L11.50 22.48 L11.19 19.76 L9.29 18.94 L8.05 17.95 L5.54 19.04 L4.04 16.44 L6.24 14.81 L6.00 12.76 L6.24 11.19 L4.04 9.56 L5.54 6.96 L8.05 8.05 Z"/>
 <circle cx="13" cy="13" r="2.4"/>
 <rect x="14.6" y="17.2" width="11.4" height="8.8" rx="3.5" fill="#bfc3cb" stroke="none"/>
</svg>
<div class="a" style="left:81.3px;top:1161.6px;font-size:9px;font-weight:bold;color:#333;letter-spacing:0.4px">PI</div>

<!-- status bar -->
<div class="a" style="left:54px;top:1181.3px;width:1812px;height:0.8px;background:#8f949c"></div>
<svg class="a sb" style="left:62px;top:1184px" width="15" height="15" viewBox="0 0 15 15" fill="none" stroke="#1e1e1e" stroke-width="1.3"><path d="M2.8 6.2 L6.4 9.3 L2.8 12.6 M12.2 2.5 L8.6 5.7 L12.2 9"/></svg>
<svg class="a sb" style="left:93px;top:1183px" width="18" height="17" viewBox="0 0 18 17" fill="none" stroke="#1e1e1e" stroke-width="1.15"><circle cx="3.5" cy="2.8" r="1.8"/><circle cx="3.5" cy="14" r="1.8"/><path d="M3.5 4.6 V12.2"/><circle cx="9" cy="4.6" r="1.8"/><path d="M9 6.4 Q9 9 4 10.5"/><circle cx="11.6" cy="12.3" r="4.1" fill="#1e1e1e" stroke="#9ea3ab" stroke-width="1"/><path d="M11.6 10.2 V14.4 M9.7 11.2 L13.5 13.4 M13.5 11.2 L9.7 13.4" stroke="#9ea3ab" stroke-width="0.9"/></svg>
<div class="a sbt" style="left:111.8px">main*</div>
<svg class="a sb" style="left:148.5px;top:1184px" width="17" height="16" viewBox="0 0 17 16" fill="none" stroke="#1e1e1e" stroke-width="1.15"><path d="M7 12.5 H4.2 Q1.5 12.5 1.5 9.8 Q1.5 7.2 4.2 7 Q4.8 3.2 8.3 3.2 Q11.4 3.2 12.2 6.3"/><circle cx="12" cy="11.5" r="4.2" fill="#1e1e1e" stroke="none"/><path d="M12 13.8 V9.4 M10.2 11.1 L12 9.3 L13.8 11.1" stroke="#9ea3ab" stroke-width="1.1"/></svg>
<svg class="a sb" style="left:179px;top:1183px" width="16" height="17" viewBox="0 0 16 17" fill="none" stroke="#1e1e1e" stroke-width="1.15"><circle cx="4.2" cy="2.8" r="1.7"/><circle cx="4.2" cy="14.3" r="1.7"/><path d="M4.2 4.5 V12.6 M7.3 2 V15 M7.3 5 Q13 6 13 9.8 Q13 12.5 9.6 12.5"/><circle cx="10.4" cy="12.5" r="1.2"/></svg>
<svg class="a sb" style="left:210.5px;top:1184px" width="15" height="15" viewBox="0 0 15 15" fill="none" stroke="#1e1e1e" stroke-width="1.15"><circle cx="7.5" cy="7.5" r="6.3"/><path d="M5 5 L10 10 M10 5 L5 10"/></svg>
<div class="a sbt" style="left:229.8px">0</div>
<svg class="a sb" style="left:240.5px;top:1183.5px" width="15" height="15" viewBox="0 0 15 15" fill="none" stroke="#1e1e1e" stroke-width="1.15" stroke-linejoin="round"><path d="M7.5 1.5 L14 13.6 H1 Z"/><path d="M7.5 5.5 V9.6 M7.5 11 V12"/></svg>
<div class="a sbt" style="left:259px">0</div>
<div class="a sbt" style="left:281.9px">Combo: 6</div>

<div class="a sbt" style="left:1222.5px">Ln 1, Col 1</div>
<div class="a sbt" style="left:1296.7px">Spaces: 2</div>
<div class="a sbt" style="left:1366px">UTF-8</div>
<div class="a sbt" style="left:1416.7px">LF</div>
<div class="a sbt" style="left:1446.7px">{ }</div>
<div class="a sbt" style="left:1467px">C</div>
<svg class="a sb" style="left:1491.5px;top:1184px" width="13" height="16" viewBox="0 0 13 16" fill="none" stroke="#1e1e1e" stroke-width="1.1" stroke-linejoin="round"><path d="M2 1.2 H8 L11.5 4.7 V14.5 H2 Z M8 1.2 V4.7 H11.5"/><path d="M4 9 H9.5 M4 11 H9.5 M4 13 H9.5" stroke-width="0.7"/></svg>
<div class="a sbt" style="left:1509.3px">Compile</div>
<svg class="a sb" style="left:1570.5px;top:1184.5px" width="14" height="14" viewBox="0 0 14 14" fill="none" stroke="#1e1e1e" stroke-width="1.15" stroke-linejoin="round"><path d="M2 1.5 L12.5 7 L2 12.5 Z"/></svg>
<div class="a sbt" style="left:1588px">Run</div>
<div class="a sbt" style="left:1624.8px">Pico SDK: 2.1.1</div>
<div class="a sbt" style="left:1726px">Board: pico</div>
<div class="a sbt" style="left:1803.7px">Pico</div>
<svg class="a sb" style="left:1842px;top:1184px" width="17" height="16" viewBox="0 0 17 16" fill="none" stroke="#1e1e1e" stroke-width="1.15" stroke-linejoin="round"><path d="M9 2.3 Q4.6 2.2 4.3 7 L4.1 10.6 Q3.9 12 2.6 12.8 H13.8 Q12.6 12 12.6 10.6 V5.5"/><path d="M6.9 13.2 L8.1 14.4 L9.3 13.2"/><circle cx="12.4" cy="2.9" r="2.5" fill="#1e1e1e" stroke="none"/></svg>

</body></html>
